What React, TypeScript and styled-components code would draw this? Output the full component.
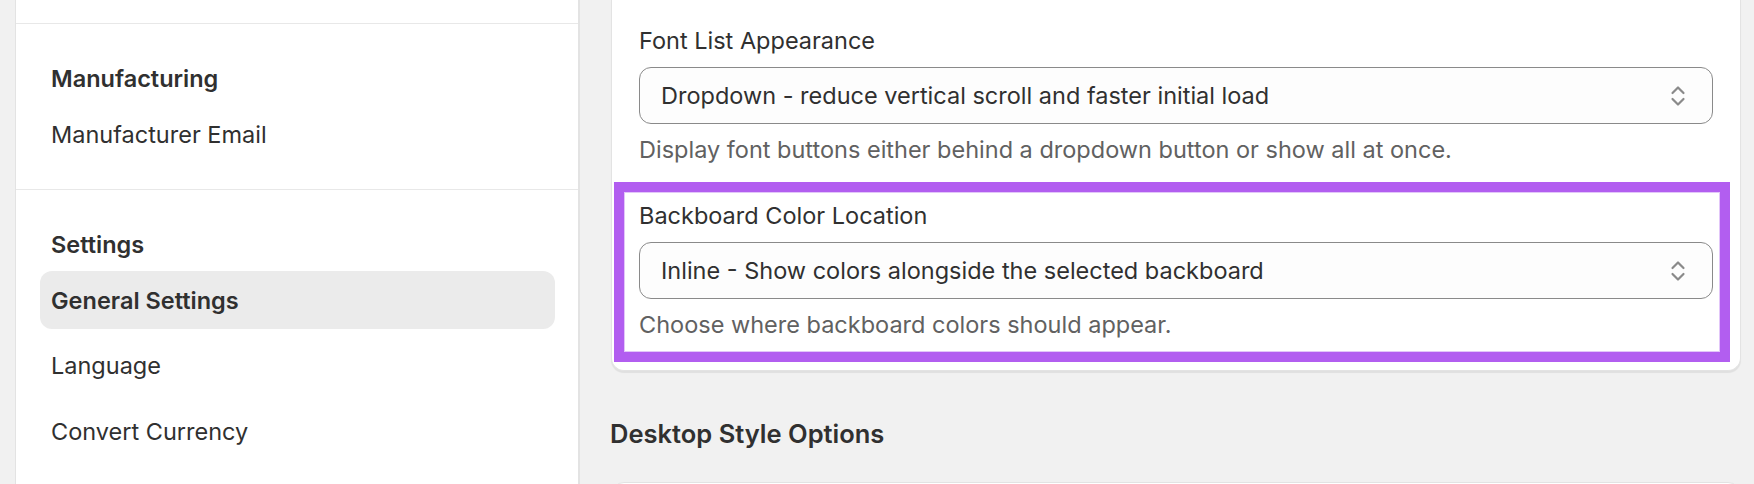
import React from "react";
import styled, { createGlobalStyle } from "styled-components";

const GlobalStyle = createGlobalStyle`
  html, body {
    margin: 0;
    padding: 0;
    background: #f1f1f1;
    font-family: Inter, "Noto Sans", "Liberation Sans", sans-serif;
    color: #303030;
  }
  * {
    box-sizing: border-box;
  }
`;

const Page = styled.div`
  display: flex;
  width: 1754px;
  height: 484px;
  overflow: hidden;
  padding-left: 15px;
`;

const Sidebar = styled.nav`
  width: 565px;
  flex-shrink: 0;
  background: #fff;
  border-left: 1px solid #e3e3e3;
  border-right: 2px solid #e3e3e3;
`;

const NavSection = styled.div<{ $cut?: boolean }>`
  display: flex;
  flex-direction: column;
  padding: ${(p) => (p.$cut ? "0" : "39px 23px 26px 24px")};
  height: ${(p) => (p.$cut ? "24px" : "auto")};
  border-bottom: 1px solid #e8e8e8;
  &:last-child {
    border-bottom: none;
  }
`;

const NavHeading = styled.h3`
  margin: 0 0 10px;
  padding-left: 11px;
  font-size: 23.5px;
  line-height: 32px;
  font-weight: 600;
`;

const NavList = styled.div`
  display: flex;
  flex-direction: column;
  gap: 7.5px;
`;

const NavItem = styled.a<{ $active?: boolean }>`
  display: flex;
  align-items: center;
  height: 58px;
  padding-left: 11px;
  border-radius: 12px;
  font-size: 23.5px;
  color: #303030;
  text-decoration: none;
  font-weight: ${(p) => (p.$active ? 600 : 400)};
  background: ${(p) => (p.$active ? "#ebebeb" : "transparent")};
`;

const Main = styled.main`
  flex: 1;
  padding: 0 13px 0 31px;
  display: flex;
  flex-direction: column;
`;

const Card = styled.section<{ $top?: boolean }>`
  background: #fff;
  border: 1px solid #e3e3e3;
  border-top: ${(p) => (p.$top ? "none" : "1px solid #e3e3e3")};
  border-radius: ${(p) => (p.$top ? "0 0 13px 13px" : "13px")};
  box-shadow: 0 2px 1px rgba(0, 0, 0, 0.07);
  padding: ${(p) => (p.$top ? "27px 27px 8px" : "27px")};
  display: flex;
  flex-direction: column;
  flex-shrink: 0;
  min-height: 60px;
`;

const Field = styled.div`
  display: flex;
  flex-direction: column;
  gap: 12px;
`;

const Highlight = styled.div`
  margin: 18px -17px 0 -25px;
  padding: 10px 7px 13px 15px;
  border: 10px solid #b25ef0;
  box-shadow: inset 0 0 0 1px #e2c6f9;
`;

const Label = styled.label`
  font-size: 23.5px;
  line-height: 28px;
  color: #303030;
`;

const SelectBox = styled.div`
  display: flex;
  align-items: center;
  justify-content: space-between;
  height: 57px;
  padding: 0 26px 0 21px;
  border: 1px solid #8a8a8a;
  border-radius: 12px;
  background: #fdfdfd;
  font-size: 23.5px;
  color: #303030;
`;

const Help = styled.div`
  font-size: 23.5px;
  line-height: 28px;
  color: #616161;
`;

const SectionTitle = styled.h2`
  margin: 47px 0 32px -1px;
  font-size: 25.5px;
  line-height: 32px;
  font-weight: 600;
  color: #303030;
`;

function Chevrons() {
  return (
    <svg width="16" height="24" viewBox="0 0 16 24" fill="none">
      <path
        d="M2.5 9L8 3.5L13.5 9"
        stroke="#8a8a8a"
        strokeWidth="2.2"
        strokeLinecap="round"
        strokeLinejoin="round"
      />
      <path
        d="M2.5 15L8 20.5L13.5 15"
        stroke="#8a8a8a"
        strokeWidth="2.2"
        strokeLinecap="round"
        strokeLinejoin="round"
      />
    </svg>
  );
}

function Select({ value }: { value: string }) {
  return (
    <SelectBox>
      <span>{value}</span>
      <Chevrons />
    </SelectBox>
  );
}

export default function App() {
  return (
    <>
      <GlobalStyle />
      <Page>
        <Sidebar>
          <NavSection $cut />
          <NavSection>
            <NavHeading>Manufacturing</NavHeading>
            <NavList>
              <NavItem href="#">Manufacturer Email</NavItem>
            </NavList>
          </NavSection>
          <NavSection>
            <NavHeading>Settings</NavHeading>
            <NavList>
              <NavItem href="#" $active>
                General Settings
              </NavItem>
              <NavItem href="#">Language</NavItem>
              <NavItem href="#">Convert Currency</NavItem>
            </NavList>
          </NavSection>
        </Sidebar>
        <Main>
          <Card $top>
            <Field>
              <Label>Font List Appearance</Label>
              <Select value="Dropdown - reduce vertical scroll and faster initial load" />
              <Help>Display font buttons either behind a dropdown button or show all at once.</Help>
            </Field>
            <Highlight>
              <Field>
                <Label>Backboard Color Location</Label>
                <Select value="Inline - Show colors alongside the selected backboard" />
                <Help>Choose where backboard colors should appear.</Help>
              </Field>
            </Highlight>
          </Card>
          <SectionTitle>Desktop Style Options</SectionTitle>
          <Card />
        </Main>
      </Page>
    </>
  );
}
